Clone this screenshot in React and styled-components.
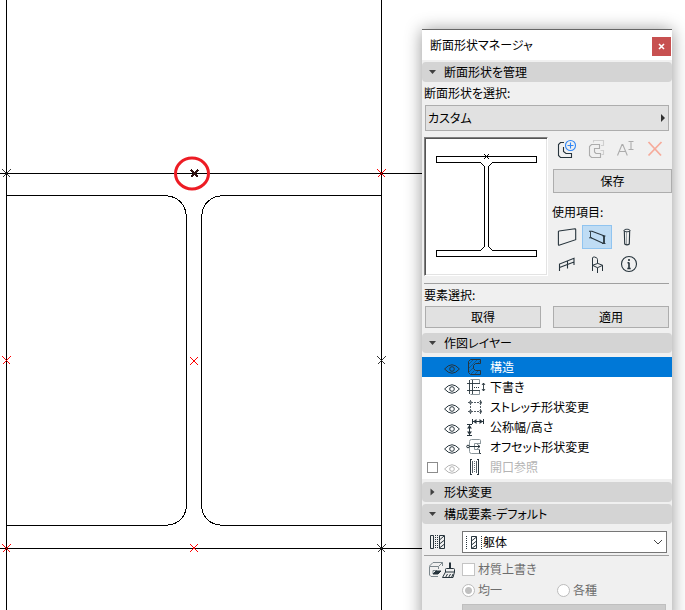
import React, { useState } from 'react';
import styled, { createGlobalStyle, css } from 'styled-components';

const INK = '#27343c';

const GlobalStyle = createGlobalStyle`
    * {
        box-sizing: border-box;
    }

    body {
        margin: 0;
        background: #fff;
        color: #000;
        font-family: 'Noto Sans CJK JP', sans-serif;
        font-size: 12px;
        line-height: 18px;
        font-feature-settings: 'palt';
    }

    button, select, input {
        font: inherit;
        font-feature-settings: inherit;
        color: inherit;
        margin: 0;
    }
`;

const Workspace = styled.main`
    position: relative;
    height: 100vh;
    overflow: hidden;
`;

const Drawing = styled.svg`
    display: block;
    width: 100%;
    height: 100%;
    fill: none;
    stroke: #000;
    shape-rendering: crispEdges;
`;

// floats over the drawing
const Palette = styled.aside`
    position: absolute;
    top: 29px;
    right: 13px;
    width: 250px;
    background: #f0f0f0;
    border-top: 1px solid #666;
    box-shadow: 0 1px 16px rgba(0, 0, 0, .42);
`;

const TitleBar = styled.header`
    display: flex;
    align-items: center;
    justify-content: space-between;
    height: 30px;
    padding: 0 1px 0 8px;
    background: #fff;

    h1 {
        margin: 0;
        font-size: 12px;
        font-weight: 400;
    }
`;

const CloseButton = styled.button`
    display: grid;
    place-items: center;
    width: 19px;
    height: 19px;
    margin-top: 3px;
    padding: 0;
    border: 0;
    background: #c75050;
`;

const SectionHeader = styled.button`
    display: flex;
    align-items: center;
    gap: 8px;
    width: 100%;
    height: 20px;
    margin-top: 2px;
    padding: 0 7px;
    border: 0;
    border-radius: 4px;
    background: #d4d4d4;
    text-align: left;

    svg {
        width: 7px;
        fill: #404040;
    }
`;

const SectionBody = styled.div`
    padding: 2px 3px 0 2px;
`;

const FieldLabel = styled.label`
    display: block;
    height: 18px;
`;

const Button = styled.button`
    height: ${({ $tall }) => ($tall ? 24 : 22)}px;
    width: 100%;
    padding: 0;
    border: 1px solid #adadad;
    background: #e1e1e1;
    line-height: 20px;
`;

const PopupField = styled.div`
    display: flex;
    align-items: center;
    height: 26px;
    margin: 3px 0 0 1px;
    padding-right: 3px;
    border: 1px solid #adadad;
    background: #e1e1e1;

    select {
        flex: 1;
        height: 24px;
        padding: 0 2px;
        border: 0;
        background: none;
        appearance: none;
    }
`;

const ShapeGrid = styled.div`
    display: grid;
    grid-template-columns: 124px 1fr;
    column-gap: 4px;
    margin-top: 6px;
`;

const Preview = styled.svg`
    display: block;
    width: 124px;
    height: 139px;
    border: 1px solid;
    border-color: #808080 #fff #fff #808080;
    background: #fff;
    box-shadow: inset 1px 1px 0 #555, inset -1px -1px 0 #e3e3e3;
    fill: none;
    stroke: #000;
    shape-rendering: crispEdges;
`;

const IconRow = styled.div`
    display: grid;
    grid-template-columns: repeat(4, 30px);
    margin-bottom: 3px;
`;

const IconButton = styled.button`
    width: 30px;
    height: 24px;
    padding: 0;
    border: 0;
    background: none;

    svg {
        display: block;
        width: 30px;
        height: 24px;
        fill: none;
        stroke: ${INK};
        stroke-width: 1.1;
    }

    ${({ $active }) => $active && css`
        background: #bfdcf4;
        box-shadow: inset 0 0 0 1px #90c4f0;
    `}
`;

const Controls = styled.div`
    ${Button} {
        width: calc(100% - 1px);
        margin: 5px 0 10px 1px;
    }

    ${FieldLabel} {
        margin-bottom: 4px;
    }
`;

const Divider = styled.hr`
    height: 1px;
    margin: 0;
    border: 0;
    background: #a0a0a0;
`;

const ShapeDivider = styled(Divider)`
    margin: 4px 0 2px;
`;

const ComponentDivider = styled(Divider)`
    margin: 2px 3px 0 2px;
`;

const ButtonPair = styled.div`
    display: grid;
    grid-template-columns: 1fr 1fr;
    gap: 12px;
    margin: 2px 0 5px 1px;
`;

const LayerList = styled.ul`
    margin: 4px 0 3px;
    padding: 0 0 2px;
    list-style: none;
    background: #fff;
`;

const LayerRow = styled.li`
    display: grid;
    grid-template-columns: 17px 22px 24px 1fr;
    align-items: center;
    height: 20px;
    padding-left: 5px;
    background: ${({ $selected }) => ($selected ? '#0078d7' : 'transparent')};
    color: ${({ $selected, $dim }) => ($selected ? '#fff' : $dim ? '#b4b4b4' : '#000')};
`;

const LayerName = styled.button`
    height: 20px;
    padding: 0;
    border: 0;
    background: none;
    text-align: left;
    line-height: 18px;
`;

const EyeButton = styled.button`
    display: block;
    padding: 3px 0 0;
    border: 0;
    background: none;

    svg {
        display: block;
        width: 16px;
        height: 12px;
        fill: none;
        stroke: ${({ $dim }) => ($dim ? '#b4b4b4' : INK)};
        stroke-width: 1;
    }
`;

const Glyph = styled.svg`
    display: block;
    flex: none;
    fill: none;
    stroke: ${INK};
`;

const CheckBox = styled.input`
    appearance: none;
    width: ${({ $small }) => ($small ? 11 : 13)}px;
    height: ${({ $small }) => ($small ? 11 : 13)}px;
    border: 1px solid ${({ $small }) => ($small ? '#8c8c8c' : '#c4c4c4')};
    background: #fff;
`;

const Radio = styled.input`
    appearance: none;
    width: 13px;
    height: 13px;
    border: 1px solid #bcbcbc;
    border-radius: 50%;
    background: #fff;

    &:checked {
        background: radial-gradient(#c0c0c0 0 3px, #fff 4px);
    }
`;

const ComponentRow = styled.div`
    display: flex;
    align-items: center;
    gap: 15px;
    padding: 7px 5px 0 7px;
`;

const ComboBox = styled.div`
    display: flex;
    align-items: center;
    flex: 1;
    height: 22px;
    padding: 0 3px;
    border: 1px solid #767676;
    background: #fff;

    select {
        flex: 1;
        height: 20px;
        padding: 0;
        border: 0;
        background: none;
        appearance: none;
    }
`;

const Material = styled.div`
    display: grid;
    grid-template-columns: 34px 1fr;
    padding: 4px 6px 0 6px;
    color: #6d6d6d;
`;

const Option = styled.label`
    display: flex;
    align-items: center;
    gap: 3px;
    height: 18px;
`;

const OptionPair = styled.div`
    display: grid;
    grid-template-columns: 95px 1fr;
    margin: 3px 0 5px;
`;

const SwatchButton = styled.button`
    display: block;
    width: 100%;
    height: 22px;
    border: 1px solid #bfbfbf;
    background: #ccc;
`;

const Cross = ({ x, y, color = '#ff0000', r = 4 }) => (
    <path
        d={`M${x - r} ${y - r}L${x + r} ${y + r}M${x + r} ${y - r}L${x - r} ${y + r}`}
        stroke={color}
    />
);

const toolIcons = {
    create: (
        <>
            <path d="M12 5.5H8.5L6.5 7.5V18.5L8.5 20.5H19.5V16.5H14L11.5 14.5V10" />
            <circle cx="18.5" cy="8.5" r="5" stroke="#2f86f6" />
            <path d="M18.5 5.5V11.5M15.5 8.5H21.5" stroke="#2f86f6" />
        </>
    ),
    duplicate: (
        <>
            <path d="M11.5 5.5V3.5H21.5V8.5H19M18.5 13.5H21.5V17.5H19.5" stroke="#cfcfcf" />
            <path d="M17.5 7.5H9.5L7.5 9.5V18.5L9.5 20.5H18.5V16.5H14L12.5 15V11.5H17.5Z" stroke="#acacac" />
        </>
    ),
    rename: (
        <path d="M5.5 18.5L10 7.5H10.8L15.3 18.5M7 14.5H13.8M16.5 4.5H18.5L19 5L19.5 4.5H21.5M19 5V12M16.5 12.5H18.5L19 12L19.5 12.5H21.5" stroke="#acacac" />
    ),
    remove: <path d="M6.5 5L19 18.5M19.5 5L6.5 18.5" stroke="#f6ab9b" strokeWidth="1.8" />,
    wall: <path d="M7 6L23 3.8Q23.7 3.8 23.7 4.5V14.7L7 20.2Q6.4 20.3 6.4 19.6V6.6Q6.4 6 7 6Z" />,
    beam: (
        <>
            <path d="M7 6.3H10L22.5 11M9 12.8L21 18.3" />
            <path d="M8.5 6.5V12.8M7 12.8H10M21.5 11V18.5M20.5 11H23.5M20 18.5H23.5M22.5 11V18.5" strokeWidth=".9" />
        </>
    ),
    column: (
        <>
            <ellipse cx="15" cy="5.5" rx="3" ry="1.3" strokeWidth=".9" />
            <path d="M12.3 5.5L12.7 19Q15 20.7 17.3 19L17.7 5.5" />
            <path d="M14.5 7V19.5" strokeWidth=".4" />
        </>
    ),
    railing: <path d="M7.5 19V12L22 6.3V13M7.5 15.5L22 9.9M15.5 9V16.5" />,
    object: <path d="M10.5 19V6Q11 4.5 12.5 5L14.3 5.7Q15.5 6.3 15.5 7.5V11.5L10.5 13.3L15.5 15.7L20.7 13.3L15.5 11.3M15.5 15.7V21M20.5 13.3V19" strokeWidth="1" />,
    info: (
        <>
            <circle cx="17" cy="12" r="7.5" />
            <path d="M17 7V9M17 10.5V16.5M15.5 10.8H17M15.3 16.5H18.7" strokeWidth="1.6" />
        </>
    ),
};

const layerIcons = {
    structure: (
        <>
            <path d="M14.5 2.5V6.5H9.5L7.5 8.5V11.5L9.5 13.5H14.5V17.5H4.5L2.5 15.5V4.5L4.5 2.5Z" />
            <path d="M3 7L7 3M3 11L11 3M3 15L7 11M5 17L8.5 13.5M9 17L12.5 13.5M12 6L14.5 3.5" strokeWidth=".5" />
        </>
    ),
    draft: (
        <>
            <path d="M4.5 2.5H13.5V6M13.5 14V17.5H4.5" stroke="#8c979c" />
            <path d="M1 6.5H14M1 13.5H14M3.5 3V17M6.5 3V17M17.5 6V14M16 8L17.5 6L19 8M16 12L17.5 14L19 12" strokeWidth=".9" />
            <path d="M8 10.5H14" strokeDasharray="1 1" />
        </>
    ),
    stretch: (
        <>
            <path d="M4.5 3V17M14.5 3V17M2 5.5H17M2 14.5H17" strokeDasharray="2 1" strokeWidth=".8" />
            <path d="M3 4L6 7M6 4L3 7M13 4L16 7M16 4L13 7M3 13L6 16M6 13L3 16M13 13L16 16M16 13L13 16" strokeWidth=".4" />
        </>
    ),
    nominal: (
        <>
            <path d="M6.5 2V7M17.5 2V7M1 7.5H6M1 18.5H6" />
            <path d="M7 4.5H17M3.5 8V18" />
            <path d="M7 4.5L10.5 2V7ZM17 4.5L13.500 2V7ZM3.5 8L1 11.5H6ZM3.5 18L1 14.5H6Z" fill={INK} stroke="none" />
        </>
    ),
    offset: (
        <>
            <path d="M14.5 7V3.5Q14.5 2.5 13.5 2.5H5.5Q3.5 2.5 3.5 4.5V14.5Q3.5 16.5 5.5 16.5H13M14 6.5H8.5V12.5H13" stroke="#8c979c" />
            <circle cx="2" cy="9.5" r="1.3" />
            <path d="M3.5 9.5H14M11.5 7.5L14 9.5L11.500 11.5M13.5 12.5V16.5H15" />
        </>
    ),
    opening: (
        <>
            <path d="M4.5 2V18M12.5 2V18M4 2.5H6M11 2.5H13M4 17.5H6M11 17.5H13" />
            <path d="M6.5 4V16M10.5 4V16" strokeWidth=".8" />
            <path d="M8.5 4V16" strokeDasharray="1 1" strokeWidth=".7" />
        </>
    ),
};

const manageTools = [
    { id: 'create', label: '新規' },
    { id: 'duplicate', label: '複製', disabled: true },
    { id: 'rename', label: '名前変更', disabled: true },
    { id: 'remove', label: '削除', disabled: true },
];

const useTools = [
    [
        { id: 'wall', label: '壁' },
        { id: 'beam', label: '梁' },
        { id: 'column', label: '柱' },
    ],
    [
        { id: 'railing', label: '手摺り' },
        { id: 'object', label: 'オブジェクト' },
        { id: 'info', label: '情報' },
    ],
];

const layers = [
    { id: 'structure', name: '構造' },
    { id: 'draft', name: '下書き' },
    { id: 'stretch', name: 'ストレッチ形状変更' },
    { id: 'nominal', name: '公称幅/高さ' },
    { id: 'offset', name: 'オフセット形状変更' },
    { id: 'opening', name: '開口参照', dim: true },
];

const Header = ({ open, children }) => (
    <SectionHeader aria-expanded={!!open}>
        <svg viewBox="0 0 7 8" height="8">
            <path d={open ? 'M0 2H7L3.5 6Z' : 'M1.5 0.5V7.5L5.5 4Z'} />
        </svg>
        {children}
    </SectionHeader>
);

const ProfileDrawing = () => (
    <Drawing aria-hidden="true">
        <path d="M6.5 0V4000M381.5 0V4000M0 173.5H430M0 548.5H430" />
        <path d="M6.5 195.5H162Q186.5 195.5 186.5 220V503Q186.5 525.5 162 525.5H6.5" />
        <path d="M381.5 195.5H226Q201.5 195.5 201.5 220V503Q201.5 525.5 226 525.5H381.5" />
        <Cross x={6.5} y={173.5} color="#333" />
        <Cross x={381.5} y={173.5} />
        <Cross x={6.5} y={360.5} />
        <Cross x={194} y={361} />
        <Cross x={381.5} y={360.5} color="#333" />
        <Cross x={6.5} y={548.5} />
        <Cross x={194} y={548} />
        <Cross x={381.5} y={548.5} color="#333" />
        <path d="M191 170L198 177M198 170L191 177" stroke="#301010" strokeWidth="2" />
        <ellipse cx="192" cy="173.5" rx="16.5" ry="15.5" stroke="#ed1c24" strokeWidth="3" shapeRendering="auto" />
    </Drawing>
);

const Tool = ({ tool, active, onClick }) => (
    <IconButton aria-label={tool.label} disabled={tool.disabled} $active={active} onClick={onClick}>
        <svg viewBox="0 0 30 24">{toolIcons[tool.id]}</svg>
    </IconButton>
);

const App = () => {
    const [target, setTarget] = useState('beam');
    const [layer, setLayer] = useState('structure');

    return (
        <Workspace>
            <GlobalStyle />
            <ProfileDrawing />
            <Palette>
                <TitleBar>
                    <h1>断面形状マネージャ</h1>
                    <CloseButton aria-label="閉じる">
                        <svg width="7" height="7" viewBox="0 0 7 7">
                            <path d="M1 1L6 6M6 1L1 6" stroke="#fff" strokeWidth="1.6" />
                        </svg>
                    </CloseButton>
                </TitleBar>

                <Header open>断面形状を管理</Header>
                <SectionBody>
                    <FieldLabel htmlFor="profile">断面形状を選択:</FieldLabel>
                    <PopupField>
                        <select id="profile">
                            <option>カスタム</option>
                        </select>
                        <svg width="4" height="8" viewBox="0 0 4 8">
                            <path d="M0 0V8L4 4Z" fill="#303030" />
                        </svg>
                    </PopupField>
                    <ShapeGrid>
                        <Preview viewBox="0 0 122 137">
                            <path d="M11.5 18.5H111.5V24.5H67.5L63.5 28.5V108.5L67.5 112.5H111.5V118.5H11.5V112.5H55.5L59.5 108.5V28.5L55.5 24.5H11.5Z" />
                            <Cross x={61.5} y={18.5} r={2.5} color="#000" />
                        </Preview>
                        <Controls>
                            <IconRow>
                                {manageTools.map((tool) => <Tool key={tool.id} tool={tool} />)}
                            </IconRow>
                            <Button $tall>保存</Button>
                            <FieldLabel as="div">使用項目:</FieldLabel>
                            {useTools.map((row, i) => (
                                <IconRow key={i}>
                                    {row.map((tool) => (
                                        <Tool
                                            key={tool.id}
                                            tool={tool}
                                            active={target === tool.id}
                                            onClick={() => setTarget(tool.id)}
                                        />
                                    ))}
                                </IconRow>
                            ))}
                        </Controls>
                    </ShapeGrid>
                    <ShapeDivider />
                    <FieldLabel as="div">要素選択:</FieldLabel>
                    <ButtonPair>
                        <Button>取得</Button>
                        <Button>適用</Button>
                    </ButtonPair>
                </SectionBody>

                <Header open>作図レイヤー</Header>
                <LayerList>
                    {layers.map(({ id, name, dim }) => (
                        <LayerRow key={id} $selected={layer === id} $dim={dim}>
                            {dim ? <CheckBox $small type="checkbox" aria-label={name} /> : <span />}
                            <EyeButton aria-label="表示" $dim={dim}>
                                <svg viewBox="0 0 16 12">
                                    <path d="M.6 6Q8-2.5 15.4 6Q8 14.5.6 6Z" />
                                    <circle cx="8" cy="6" r="2.3" />
                                </svg>
                            </EyeButton>
                            <Glyph width="20" height="20" viewBox="0 0 20 20">{layerIcons[id]}</Glyph>
                            <LayerName onClick={() => setLayer(id)}>{name}</LayerName>
                        </LayerRow>
                    ))}
                </LayerList>

                <Header>形状変更</Header>
                <Header open>構成要素-デフォルト</Header>
                <ComponentRow>
                    <Glyph width="18" height="14" viewBox="0 0 18 14">
                        <path d="M1.5.5H4.5V13.5H1.5ZM10.5.5H15.5V13.5H10.5ZM10.5 5L15 1M10.5 9L15.5 5M10.5 13L15.5 9" />
                        <path d="M6.5 0V14M8.5 0V14" strokeDasharray="1 1" />
                    </Glyph>
                    <ComboBox>
                        <Glyph width="17" height="14" viewBox="0 0 17 14">
                            <path d="M5.5 1.5H10.5V13.5H5.5ZM5.5 6L10.5 2M5.5 10L10.5 6M5.5 13.5L10.5 10" />
                            <path d="M.5 1V14M15.5 1V14" strokeDasharray="1 1" />
                        </Glyph>
                        <select aria-label="構成要素">
                            <option>躯体</option>
                        </select>
                        <svg width="10" height="6" viewBox="0 0 10 6" fill="none" stroke="#444">
                            <path d="M1 1L5 5L9 1" />
                        </svg>
                    </ComboBox>
                </ComponentRow>
                <ComponentDivider />
                <Material>
                    <Glyph width="28" height="20" viewBox="0 0 28 20">
                        <path d="M1.5 6L5 2.5H14.5V6M1.5 6.5H10.5L14.5 2.5M1.5 6.5V15L3 16.5H10M10.5 6.5V9M5 10.5V14M5 10.5H9" stroke="#7d888d" />
                        <path d="M5 14L8 11H13L10 14Z" fill={INK} />
                        <path d="M21.5 2.5V8M22.5 2.5V8M17.5 12V9.5Q17.5 8.5 18.5 8.5H25.5Q26.5 8.5 26.5 9.5V12ZM17.5 12L14.5 17.5H25L26.5 12M17.5 17.5L19.5 14M20.5 17.5L22.5 14M23.5 17.5L25 14" />
                    </Glyph>
                    <div>
                        <Option>
                            <CheckBox type="checkbox" disabled />
                            材質上書き
                        </Option>
                        <OptionPair>
                            <Option>
                                <Radio type="radio" name="surface" defaultChecked disabled />
                                均一
                            </Option>
                            <Option>
                                <Radio type="radio" name="surface" disabled />
                                各種
                            </Option>
                        </OptionPair>
                        <SwatchButton aria-label="材質" disabled />
                    </div>
                </Material>
            </Palette>
        </Workspace>
    );
};

export default App;
